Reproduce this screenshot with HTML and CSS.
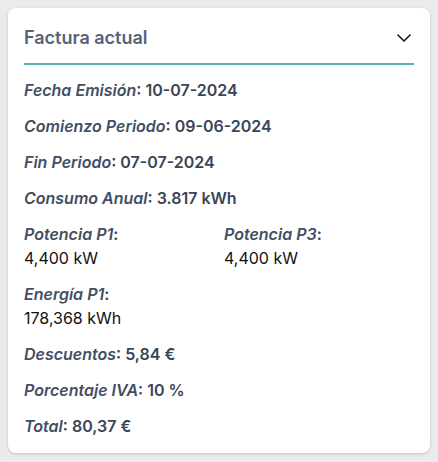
FILE: index.html
```html
<!DOCTYPE html>
<html lang="es">
<head>
<meta charset="utf-8">
<link rel="stylesheet" href="styles.css">
</head>
<body>
<div class="card">
  <div class="header">
    <h2 class="title">Factura actual</h2>
    <svg class="chevron" width="14" height="8" viewBox="0 0 14 8"><path d="M1 1 L7 7 L13 1" fill="none" stroke="#111" stroke-width="1.5" stroke-linecap="round" stroke-linejoin="round"/></svg>
  </div>
  <div class="body">
    <div class="row"><em class="label">Fecha Emisión</em>: 10-07-2024</div>
    <div class="row"><em class="label">Comienzo Periodo</em>: 09-06-2024</div>
    <div class="row"><em class="label">Fin Periodo</em>: 07-07-2024</div>
    <div class="row"><em class="label">Consumo Anual</em>: 3.817 kWh</div>
    <div class="grid">
      <div class="cell"><div class="row"><em class="label">Potencia P1</em>:</div><div class="value">4,400 kW</div></div>
      <div class="cell"><div class="row"><em class="label">Potencia P3</em>:</div><div class="value">4,400 kW</div></div>
    </div>
    <div class="grid">
      <div class="cell"><div class="row"><em class="label">Energía P1</em>:</div><div class="value">178,368 kWh</div></div>
    </div>
    <div class="row"><em class="label">Descuentos</em>: 5,84 €</div>
    <div class="row"><em class="label">Porcentaje IVA</em>: 10 %</div>
    <div class="row"><em class="label">Total</em>: 80,37 €</div>
  </div>
</div>
</body>
</html>
```
FILE: styles.css
```css
html, body { margin: 0; padding: 0; }
body {
  background: #ebebeb;
  padding: 8px;
  font-family: Inter, "Noto Sans", sans-serif;
  height: 462px;
  box-sizing: border-box;
}
.card {
  background: #fff;
  border-radius: 8px;
  box-shadow: 0 1px 3px rgba(0,0,0,0.18);
  padding: 16px 16px 15px;
}
.header {
  display: flex;
  align-items: center;
  justify-content: space-between;
  padding-bottom: 11px;
  border-bottom: 2px solid #4fb3b0;
}
.title {
  margin: 0;
  font-size: 18px;
  line-height: 28px;
  font-weight: 600;
  color: #56627a;
}
.chevron { margin-right: 3px; }
.body {
  display: flex;
  flex-direction: column;
  gap: 12px;
  padding-top: 13px;
}
.row {
  font-size: 16px;
  line-height: 24px;
  font-weight: 600;
  color: #3a4556;
}
.label {
  font-style: italic;
  color: #434e63;
}
.grid {
  display: grid;
  grid-template-columns: 1fr 1fr;
  column-gap: 10px;
}
.value {
  font-size: 16px;
  line-height: 24px;
  font-weight: 400;
  color: #111;
}
```
